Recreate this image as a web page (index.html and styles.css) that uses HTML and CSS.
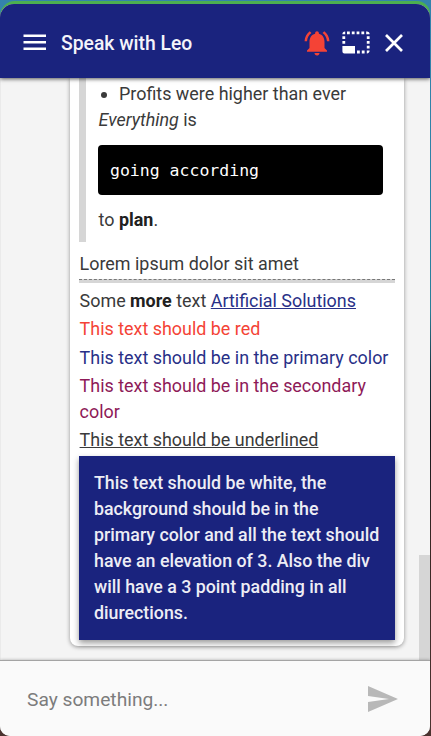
FILE: index.html
```html
<!DOCTYPE html>
<html lang="en">
<head>
<meta charset="utf-8">
<title>Speak with Leo</title>
<link rel="stylesheet" href="styles.css">
</head>
<body>
<div class="frame">
<div class="chat">
  <header class="header">
    <svg class="menu" width="24" height="17" viewBox="0 0 24 17"><path fill="#fff" d="M.5.5h22.5v2.6H.5zM.5 7h22.5v2.6H.5zM.5 13.5h22.5v2.6H.5z"/></svg>
    <h1 class="title">Speak with Leo</h1>
    <svg class="bell" width="30" height="30" viewBox="0 0 24 24"><path fill="#f44336" d="M7.58 4.08 6.15 2.65C3.75 4.48 2.17 7.3 2.03 10.5h2c.15-2.65 1.51-4.97 3.55-6.42zm12.39 6.42h2c-.15-3.2-1.73-6.02-4.12-7.85l-1.42 1.43c2.02 1.45 3.39 3.77 3.54 6.42zM18 11c0-3.07-1.64-5.64-4.5-6.32V4c0-.83-.67-1.5-1.5-1.5s-1.5.67-1.5 1.5v.68C7.63 5.36 6 7.92 6 11v5l-2 2v1h16v-1l-2-2v-5zm-6 11c.14 0 .27-.01.4-.04.65-.14 1.18-.58 1.44-1.18.1-.24.15-.5.15-.78h-4c.01 1.1.9 2 2.01 2z"/></svg>
    <svg class="resize" width="28" height="23" viewBox="0 0 28 23"><g fill="none" stroke="#fff" stroke-width="2.8"><path d="M3 1.8h22" stroke-dasharray="2.8 2" stroke-dashoffset="-2"/><path d="M26.2 5.2v14" stroke-dasharray="2.8 2"/><path d="M1.8 5.2v8" stroke-dasharray="2.8 2"/><path d="M15 21h9.5" stroke-dasharray="2.8 2"/></g><path fill="#fff" d="M.4 3.2q0-2.8 2.8-2.8v2.8zM27.6 3.2q0-2.8-2.8-2.8v2.8zM27.6 19.6q0 2.8-2.8 2.8v-2.8zM.4 15H13v7.4H2.4q-2 0-2-2z"/></svg>
    <svg class="close" width="18" height="18" viewBox="0 0 18 18"><path fill="none" stroke="#fff" stroke-width="2.7" d="m1 1 16 16M17 1 1 17"/></svg>
  </header>
  <main class="messages">
    <article class="bubble">
      <blockquote class="quote">
        <ul class="list"><li>Profits were higher than ever</li></ul>
        <div><em>Everything</em> is</div>
        <pre class="code">going according</pre>
        <div>to <b>plan</b>.</div>
      </blockquote>
      <p class="lorem">Lorem ipsum dolor sit amet</p>
      <hr class="rule">
      <p class="line">Some <b>more</b> text <a class="link">Artificial Solutions</a></p>
      <p class="line red">This text should be red</p>
      <p class="line primary">This text should be in the primary color</p>
      <p class="line secondary">This text should be in the secondary color</p>
      <p class="line underlined">This text should be underlined</p>
      <div class="panel">This text should be white, the background should be in the primary color and all the text should have an elevation of 3. Also the div will have a 3 point padding in all diurections.</div>
    </article>
    <div class="scrollbar"><div class="thumb"></div></div>
  </main>
  <footer class="composer">
    <span class="placeholder">Say something...</span>
    <svg class="send" width="30" height="26" viewBox="0 0 30 26"><path fill="#b8b8b8" d="M0 0 30 13 0 26V16l21-3L0 10z"/></svg>
  </footer>
</div>
</div>
</body>
</html>
```
FILE: styles.css
```css
* { box-sizing: border-box; }
body {
  margin: 0;
  height: 736px;
  padding-top: 1px;
  overflow: hidden;
  font: 400 17.92px/26px Roboto, sans-serif;
  color: #3a3a3a;
  background: linear-gradient(#3483ad 0, #2a82a5 230px, #287f98 310px, #173642 370px, #15191d 430px, #382724 540px, #4b3330 736px);
}
.frame {
  width: 430px;
  height: 735px;
  padding-top: 3px;
  border-radius: 15px 13px 10px 14px;
  background: linear-gradient(#4caf50 0 30px, transparent 30px);
}
.chat {
  height: 732px;
  display: flex;
  flex-direction: column;
  overflow: hidden;
  border-radius: 14px 14px 10px 10px;
  background: #f4f4f4;
}
.header {
  flex: 0 0 74px;
  display: flex;
  align-items: center;
  padding: 3px 27px 0 23px;
  background: #1a237e;
  box-shadow: 0 1px 4px rgba(0, 0, 0, .65);
  z-index: 1;
}
.title {
  flex: 1;
  margin: 2px 0 0 14px;
  font-size: 19.35px;
  font-weight: 500;
  color: #f4f4fa;
}
.bell { margin-right: 10px; }
.resize { margin-right: 15px; }
.messages {
  flex: 0 0 582px;
  display: flex;
  justify-content: flex-end;
  overflow: hidden;
  border-left: 1px solid #eaeaea;
}
.bubble {
  width: 334px;
  height: 568px;
  margin-right: 15px;
  padding: 0 9px;
  background: #fff;
  border-radius: 0 0 8px 8px;
  box-shadow: 0 1px 4px rgba(0, 0, 0, .4);
}
.quote {
  margin: 0;
  height: 164px;
  padding: 3px 12px 0;
  border-left: 7px solid #d6d6d6;
}
.quote > div { padding-left: .6px; }
.list { margin: 0; padding-left: 21px; }
.code {
  margin: 12px 0;
  padding: 13px 12px 11px;
  height: 50px;
  border-radius: 4px;
  background: #000;
  color: #fff;
  font: 400 16.5px/26px "DejaVu Sans Mono", monospace;
}
b { font-weight: 700; color: #212121; }
.lorem { margin: 9px 0 2px; padding-left: .6px; }
.rule {
  margin: 0 0 5px;
  height: 4px;
  border: 0;
  border-top: 1px dashed #777;
  background: #d6d6d6;
}
.line { margin: 0 0 2.3px; padding-left: .6px; }
.link { color: #283087; text-decoration: underline; }
.red { color: #f44336; }
.primary { color: #283087; }
.secondary { color: #8e1a58; }
.underlined { text-decoration: underline; }
.panel {
  height: 184px;
  margin-top: 2.8px;
  padding: 14px 14px 14px 15px;
  font-size: 17.8px;
  font-weight: 500;
  color: #ededf5;
  background: #1a237e;
  box-shadow: 0 3px 6px rgba(0, 0, 0, .4);
}
.scrollbar {
  width: 11px;
  display: flex;
  align-items: flex-end;
}
.thumb { width: 11px; height: 105px; background: #d6d6d6; }
.composer {
  flex: 1;
  display: flex;
  align-items: center;
  justify-content: space-between;
  padding: 0 32px 0 27px;
  border-top: 1px solid #a4a4a4;
  background: #fafafa;
  box-shadow: 0 0 3px rgba(0, 0, 0, .3);
  z-index: 1;
}
.placeholder { margin-top: 3px; font-size: 19.2px; color: #7c7c7c; }
```
